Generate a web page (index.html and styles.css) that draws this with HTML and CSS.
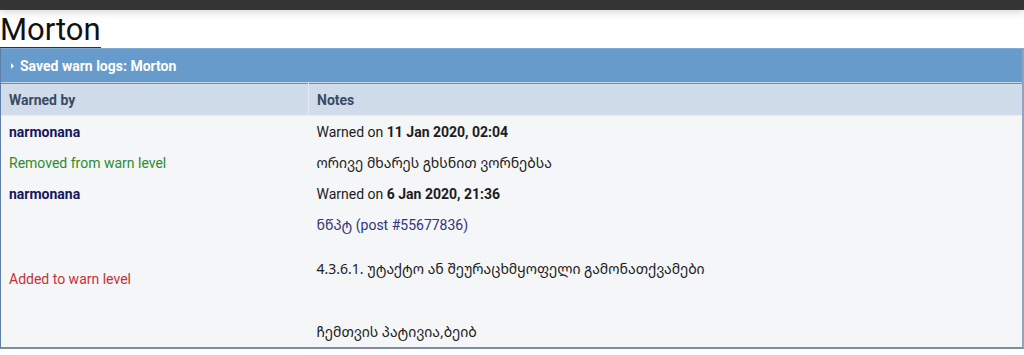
FILE: index.html
```html
<!DOCTYPE html>
<html lang="en">
<head>
    <meta charset="UTF-8">
    <meta name="viewport" content="width=device-width, initial-scale=1.0">
    <title>Morton - Warn log</title>
    <link rel="stylesheet" href="styles.css">
</head>
<body>

    <div class="top-bar"></div>

    <h1 class="page-title">Morton</h1>

    <div class="warn-block">
        <div class="warn-block-header">
            <span class="arrow"></span>
            Saved warn logs: Morton
        </div>

        <table class="warn-table">
            <thead>
                <tr>
                    <th class="col-by">Warned by</th>
                    <th>Notes</th>
                </tr>
            </thead>
            <tbody>
                <tr>
                    <td class="member">narmonana</td>
                    <td>Warned on <b>11 Jan 2020, 02:04</b></td>
                </tr>
                <tr>
                    <td class="removed">Removed from warn level</td>
                    <td class="ka">ორივე მხარეს გხსნით ვორნებსა</td>
                </tr>
                <tr>
                    <td class="member">narmonana</td>
                    <td>Warned on <b>6 Jan 2020, 21:36</b></td>
                </tr>
                <tr>
                    <td class="added">Added to warn level</td>
                    <td class="notes">
                        <a href="#" class="post-link"><span class="ka">ნწპტ</span> (post #55677836)</a>
                        <p class="ka rule">4.3.6.1. უტაქტო ან შეურაცხმყოფელი გამონათქვამები</p>
                        <p class="ka sign">ჩემთვის პატივია,ბეიბ</p>
                    </td>
                </tr>
            </tbody>
        </table>
    </div>

</body>
</html>
```

FILE: styles.css
```css
/* Base Styles */

body {
    margin: 0;
    background-color: #fff;
    font-family: Roboto, "Noto Sans", "DejaVu Sans", sans-serif;
    font-size: 14px;
    color: #1c1c1c;
}

.top-bar {
    height: 10px;
    background-color: #343537;
    box-shadow: 0 2px 8px rgba(0, 0, 0, 0.18);
}

.page-title {
    width: fit-content;
    margin: 3px 0 0;
    font-size: 31px;
    font-weight: 400;
    line-height: 34px;
    color: #111;
    border-bottom: 1px solid #333;
}

/* Warn block */

.warn-block {
    border-left: 1px solid #5f7fa8;
    border-right: 2px solid #8ea5c1;
    border-bottom: 2px solid #7d8da2;
}

.warn-block-header {
    display: flex;
    align-items: center;
    gap: 6px;
    height: 33px;
    padding-left: 10px;
    background-color: #679bcc;
    border-top: 1px solid #82acd6;
    border-bottom: 1px solid #c3d6ec;
    color: #fff;
    font-size: 14px;
    font-weight: 700;
}

.arrow {
    width: 0;
    height: 0;
    border-top: 3px solid transparent;
    border-bottom: 3px solid transparent;
    border-left: 3px solid #fff;
    margin-top: 1px;
}

.warn-table {
    width: 100%;
    border-collapse: collapse;
    border-top: 1px solid #6d8db5;
}

.warn-table th {
    height: 31px;
    padding: 0 8px;
    background-color: #d0dcea;
    color: #3a4a64;
    font-weight: 700;
    text-align: left;
    border-bottom: 1px solid #e6edf5;
}

.warn-table th.col-by {
    width: 291px;
    border-right: 1px solid #e3eaf3;
}

.warn-table td {
    padding: 7px 8px 6px;
    line-height: 18px;
    background-color: #f4f6f7;
    vertical-align: middle;
}

.warn-table td b {
    font-weight: 700;
}

.member {
    color: #16165c;
    font-weight: 700;
}

.removed {
    color: #2f8a2f;
}

.added {
    color: #c4323a;
}

.ka {
    font-family: "Noto Sans Georgian", "DejaVu Sans", "Noto Sans", sans-serif;
    font-size: 14px;
}

.notes {
    padding-bottom: 14px;
}

.post-link {
    display: block;
    color: #33337a;
    text-decoration: none;
}

.notes p {
    margin: 0;
}

.notes .rule {
    margin-top: 26px;
}

.notes .sign {
    margin-top: 45px;
}
```
